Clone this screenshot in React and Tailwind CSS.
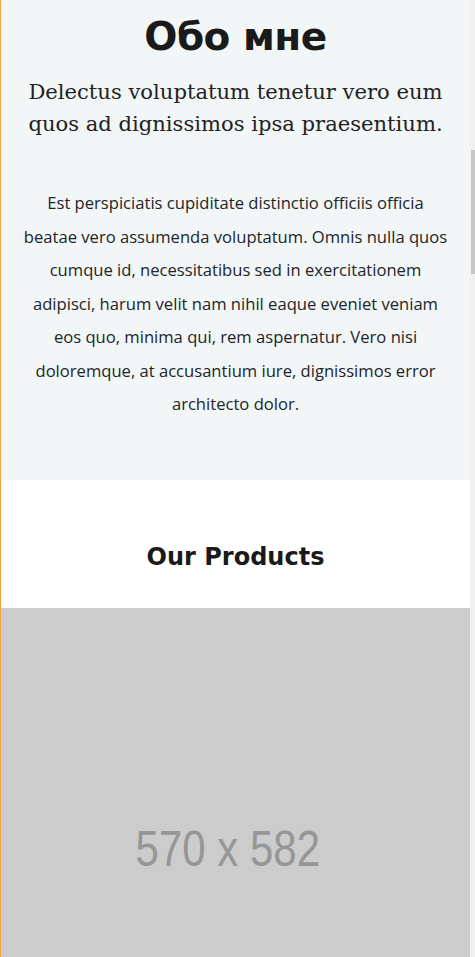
import React from "react";

export default function App() {
  return (
    <div className="flex w-[475px] h-[957px] overflow-hidden bg-white">
      <div className="flex-1 flex flex-col border-l border-[#f0a53c]">
        {/* about section */}
        <section className="shrink-0 bg-[#f2f6f7] h-[480px] flex flex-col items-center text-center">
          <h1 className="mt-[13px] text-[39px] leading-[48px] font-bold text-[#1a1a1a] font-['DejaVu_Sans',sans-serif] tracking-[-0.5px]">
            Обо мне
          </h1>
          <p className="mt-[15px] px-[20px] text-[21.1px] leading-[32px] text-[#222] font-['DejaVu_Serif',serif]">
            Delectus voluptatum tenetur vero eum quos ad dignissimos ipsa praesentium.
          </p>
          <p className="mt-[46px] px-[18px] text-[16.6px] leading-[33.5px] text-[#212529] font-['Open_Sans',sans-serif]">
            Est perspiciatis cupiditate distinctio officiis officia beatae vero assumenda voluptatum. Omnis nulla
            quos cumque id, necessitatibus sed in exercitationem adipisci, harum velit nam nihil eaque eveniet
            veniam eos quo, minima qui, rem aspernatur. Vero nisi doloremque, at accusantium iure, dignissimos error
            architecto dolor.
          </p>
        </section>

        {/* products */}
        <section className="shrink-0 h-[128px] flex items-end justify-center pb-[35px]">
          <h2 className="text-[24px] leading-[32px] font-bold text-[#1a1a1a] font-['DejaVu_Sans',sans-serif]">
            Our Products
          </h2>
        </section>
        <div className="bg-[#cccccc] h-[479px] shrink-0 flex items-center justify-center pr-[15px] pt-[4px]">
          <span className="text-[50px] text-[#969696] font-['Liberation_Sans',sans-serif] scale-x-[0.84]">570 x 582</span>
        </div>
      </div>

      {/* scrollbar */}
      <div className="w-[5px] bg-[#f0f0f0] shrink-0">
        <div className="mt-[150px] h-[124px] w-[4px] ml-[1px] bg-[#c8c8c8]" />
      </div>
    </div>
  );
}
